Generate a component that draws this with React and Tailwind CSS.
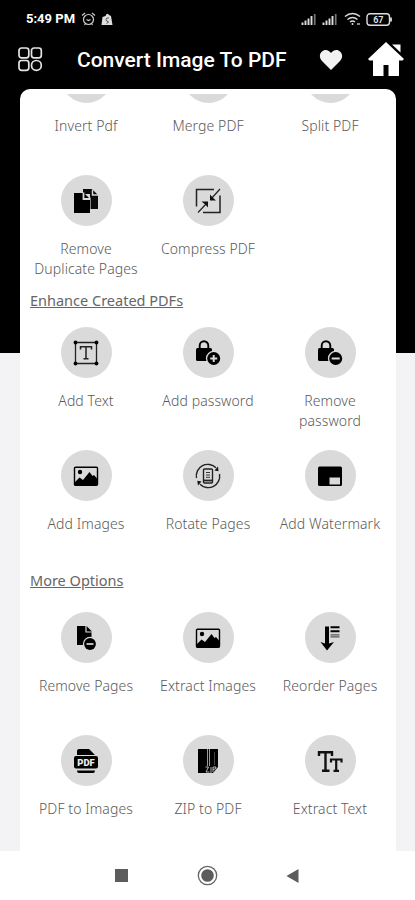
import React from "react";

const DuplicateIcon = () => (
  <svg width="26" height="26" viewBox="0 0 26 26">
    <path d="M10 1h9l6 6v14h-8V6h-7z" fill="#0a0a0a" />
    <path d="M1 5h10l6 6v14H1z" fill="#000" />
    <path d="M10.5 4.5V11H17" fill="none" stroke="#dadada" strokeWidth="1.8" />
    <path d="M19.5 1.500V7H25" fill="none" stroke="#dadada" strokeWidth="1.5" />
    <path d="M17.500 9.500V21" stroke="#dadada" strokeWidth="0.600" />
  </svg>
);

const CompressIcon = () => (
  <svg width="26" height="26" viewBox="0 0 26 26" fill="none" stroke="#222" strokeWidth="1.500">
    <path d="M1.500 18.500V1.500H19" />
    <path d="M25 7.500V24.500H8" />
    <path d="M3 24.500L12 15M25 1L16 11" strokeWidth="1.200" />
    <path d="M6.500 13.500h6.500v6l-2.200-2.500-1.800-1.600zM15 6.500v6h6l-2-1.800-2-2z" fill="#111" stroke="none" />
  </svg>
);

const TextBoxIcon = () => (
  <svg width="26" height="26" viewBox="0 0 26 26" fill="none" stroke="#222">
    <path d="M2.500 2.500h21v21h-21z" strokeWidth="1.300" />
    <path d="M7.500 9.500V6.800h11v2.700M13 6.800v12M10.500 18.800h5" strokeWidth="1.500" />
    <g fill="#000" stroke="none">
      <circle cx="2.500" cy="2.500" r="1.900" />
      <circle cx="23.500" cy="2.500" r="1.900" />
      <circle cx="2.500" cy="23.500" r="1.900" />
      <circle cx="23.500" cy="23.500" r="1.900" />
    </g>
  </svg>
);

const LockIcon = ({ plus }) => (
  <svg width="26" height="26" viewBox="0 0 26 26">
    <path d="M4.700 9V5.500a4.300 4.300 0 0 1 8.600 0V9" fill="none" stroke="#000" strokeWidth="1.900" />
    <rect x="1" y="8" width="16" height="13" rx="1.500" />
    <circle cx="18.700" cy="18.500" r="7.800" fill="#dadada" />
    <circle cx="18.700" cy="18.500" r="6.500" />
    <path d={plus ? "M15.200 18.500h7M18.700 15v7" : "M14.700 18.500h8"} stroke="#dadada" strokeWidth="2" />
  </svg>
);

const ImageIcon = () => (
  <svg width="26" height="26" viewBox="0 0 26 26">
    <rect x="1.500" y="4.200" width="23" height="18" rx="1" fill="none" stroke="#000" strokeWidth="1.400" />
    <circle cx="7" cy="9" r="2.200" />
    <path d="M2 19l4.500-4.500 3.500 2.500 6.500-8 3 4 1.500-1 3.500 4v6H2z" />
  </svg>
);

const RotateIcon = () => (
  <svg width="26" height="26" viewBox="0 0 26 26" fill="none" stroke="#222" strokeWidth="1.400">
    <path d="M1.500 15A11.500 11.500 0 0 1 21 4.800" />
    <path d="M24.500 11A11.500 11.500 0 0 1 5 21.200" />
    <path d="M19.500 7.500l4 .8L23 3.500zM6.500 18.500l-4.200-.8.700 4.800z" fill="#111" stroke="none" />
    <rect x="8.500" y="6" width="9" height="14" rx="1" />
    <path d="M8.500 17.500h9" strokeWidth="1.800" />
    <path d="M11 9.500h4M11 12h4M11 14.300h4" strokeWidth="0.900" />
  </svg>
);

const WatermarkIcon = () => (
  <svg width="26" height="26" viewBox="0 0 26 26">
    <rect x="1" y="3.500" width="24" height="19.500" rx="1.500" />
    <path d="M12.500 14.500h10.500v7h-10.500z" fill="#dadada" />
  </svg>
);

const RemovePageIcon = () => (
  <svg width="26" height="26" viewBox="0 0 26 26">
    <path d="M4 1h9.500l5 5v14H4z" />
    <path d="M13 1v6h5.500" fill="none" stroke="#dadada" strokeWidth="1.200" />
    <circle cx="17" cy="19" r="7.200" fill="#dadada" />
    <circle cx="17" cy="19" r="5.900" />
    <path d="M13.500 19h7" stroke="#dadada" strokeWidth="1.700" />
  </svg>
);

const ReorderIcon = () => (
  <svg width="26" height="26" viewBox="0 0 26 26">
    <path d="M8 1.500h4v17l5-1.500-7 8.500-6.500-8.500 4.500 1.500z" />
    <path d="M13.500 2.300h9M13.500 6.300h9" stroke="#000" strokeWidth="1.900" />
    <path d="M13.500 9.800h9M13.500 11.800h9" stroke="#555" strokeWidth="1.200" />
  </svg>
);

const PdfIcon = () => (
  <svg width="26" height="26" viewBox="0 0 26 26">
    <path d="M4 7V3q0-2 2-2h10l6 6z" />
    <rect x="1" y="8" width="24" height="12.500" rx="2" />
    <path d="M4 22.500h18q0 2.500-2 2.500H6q-2 0-2-2.500z" />
    <text
      x="13"
      y="17.600"
      textAnchor="middle"
      fill="#eee"
      fontSize="9.500"
      fontWeight="900"
      fontFamily="Roboto, sans-serif"
    >
      PDF
    </text>
  </svg>
);

const ZipIcon = () => (
  <svg width="26" height="26" viewBox="0 0 26 26">
    <path d="M3 1h20v18l-5 6H3z" />
    <path d="M12.500 1v17M14.500 1v17" stroke="#aaa" strokeWidth="0.900" />
    <path d="M19.500 4v13" stroke="#555" strokeWidth="0.800" />
    <path d="M10.500 19h3l-2.500 5h3.500M16 25v-6M18 24v-5h3q.5 2.500-3 2.500" stroke="#ccc" strokeWidth="0.900" fill="none" />
  </svg>
);

const FontSizeIcon = () => (
  <svg width="26" height="26" viewBox="0 0 26 26" fill="none" stroke="#111">
    <path d="M2 8V4.300h13V8M8.500 4v19M5 22.800h7.500" strokeWidth="2.400" />
    <path d="M14 14.500v-3h10.500v3M19.200 11.500V23M16.500 22.800h5.500" strokeWidth="2.200" />
  </svg>
);

const topTools = [
  { label: "Invert Pdf" },
  { label: "Merge PDF" },
  { label: "Split PDF" },
  { label: "Remove Duplicate Pages", icon: <DuplicateIcon /> },
  { label: "Compress PDF", icon: <CompressIcon /> },
];

const enhanceTools = [
  { label: "Add Text", icon: <TextBoxIcon /> },
  { label: "Add password", icon: <LockIcon plus /> },
  { label: "Remove password", icon: <LockIcon /> },
  { label: "Add Images", icon: <ImageIcon /> },
  { label: "Rotate Pages", icon: <RotateIcon /> },
  { label: "Add Watermark", icon: <WatermarkIcon /> },
];

const moreTools = [
  { label: "Remove Pages", icon: <RemovePageIcon /> },
  { label: "Extract Images", icon: <ImageIcon /> },
  { label: "Reorder Pages", icon: <ReorderIcon /> },
  { label: "PDF to Images", icon: <PdfIcon /> },
  { label: "ZIP to PDF", icon: <ZipIcon /> },
  { label: "Extract Text", icon: <FontSizeIcon /> },
];

const ToolGrid = ({ tools }) => (
  <div className="grid grid-cols-3 gap-y-5">
    {tools.map((tool) => (
      <div key={tool.label} className="flex h-[103px] flex-col items-center gap-[13px]">
        <div className="flex h-[51px] w-[51px] shrink-0 items-center justify-center rounded-full bg-[#dadada]">
          {tool.icon}
        </div>
        <div className="px-1 text-center text-sm leading-5 font-light tracking-[0.1px] text-[#5a5a5a]">
          {tool.label}
        </div>
      </div>
    ))}
  </div>
);

const SectionTitle = ({ children }) => (
  <h2 className="pl-[5px] text-[14.500px] leading-5 text-[#666] underline underline-offset-1">{children}</h2>
);

const Signal = () => (
  <svg width="16" height="12" viewBox="0 0 16 12">
    <path d="M1.500 12V9.500M4.500 12V7.500M7.500 12V5.500M10.500 12V3" stroke="#ddd" strokeWidth="1.900" />
    <path d="M13.700 12V1" stroke="#777" strokeWidth="1.700" />
  </svg>
);

const StatusBar = () => (
  <div className="flex h-[38px] items-center pr-[22px] pl-[26px] font-[Roboto,sans-serif] text-white">
    <span className="w-[50px] text-[13px] font-bold whitespace-nowrap">5:49 PM</span>
    <svg className="ml-[5px]" width="15" height="14" viewBox="0 0 15 14" fill="none" stroke="#ccc" strokeWidth="1.200">
      <circle cx="7.500" cy="7.500" r="5" />
      <path d="M1 3.500L4 1M14 3.500L11 1M3.500 13l1-1.500M11.500 13l-1-1.500M5.500 7.500l2 1 2-1" />
    </svg>
    <svg className="ml-[5px]" width="12" height="14" viewBox="0 0 12 14">
      <path d="M1.500 5l3-1Q6 0 8 3l2 1 1.500 9h-11z" fill="#ddd" />
      <path d="M8 6q-3-.5-3 1.500t2 2-1.500 2" stroke="#555" strokeWidth="1" fill="none" />
    </svg>
    <div className="ml-auto flex items-center">
      <Signal />
      <span className="w-[5px]" />
      <Signal />
      <svg className="ml-[6px]" width="18" height="14" viewBox="0 0 18 14" fill="none" stroke="#ddd" strokeWidth="1.500">
        <path d="M1 4.500q7.500-6 15 0M3.500 7.500q5-4 10 0M6 10q2.500-2 5 0" />
        <circle cx="8.500" cy="12" r="1" fill="#ddd" stroke="none" />
        <path d="M13 12h3" strokeWidth="1.800" stroke="#999" />
      </svg>
      <svg className="ml-[4px]" width="27" height="13" viewBox="0 0 27 13">
        <rect x="1" y="0.800" width="22.500" height="11.400" rx="3" fill="none" stroke="#ddd" strokeWidth="1.400" />
        <path d="M25 4.500v4" stroke="#ddd" strokeWidth="1.800" />
        <text x="12.300" y="9.700" textAnchor="middle" fill="#ddd" fontSize="9" fontWeight="700">
          67
        </text>
      </svg>
    </div>
  </div>
);

const Header = () => (
  <div className="flex h-[51px] items-center pt-[1px] pr-[11px] pb-[9px] pl-[18px]">
    <svg width="25" height="25" viewBox="0 0 25 25" fill="none" stroke="#e4e4e4" strokeWidth="1.700">
      <rect x="1" y="1" width="9.800" height="9.800" rx="2.500" />
      <rect x="13.500" y="1" width="9.800" height="9.800" rx="2.500" />
      <rect x="1" y="13.500" width="9.800" height="9.800" rx="2.500" />
      <circle cx="18.400" cy="18.400" r="4.900" />
    </svg>
    <h1 className="ml-[34px] w-[212px] pt-[3px] font-[Roboto,sans-serif] text-[21px] font-medium whitespace-nowrap text-white">
      Convert Image To PDF
    </h1>
    <svg className="ml-[30px]" width="24" height="22" viewBox="0 0 24 22">
      <path d="M12 21L3 12C-2 6 3 1 6.500 1 9 1 11 2.500 12 4c1-1.500 3-3 5.500-3C21 1 26 6 21 12z" fill="#f2f2f2" />
    </svg>
    <svg className="ml-auto" width="36" height="36" viewBox="0 0 36 36" fill="#fff">
      <path d="M18 0L0 17l1.500 1.500H5V34h10.500V23h5v11H31V18.500h3.500L36 17z" />
      <path d="M24 2.500h8.500v8z" />
    </svg>
  </div>
);

const NavBar = () => (
  <div className="flex h-[49px] items-center bg-white pl-[115px]">
    <div className="h-[13px] w-[13px] bg-[#5c5c5c]" />
    <svg className="ml-[69px]" width="21" height="21" viewBox="0 0 21 21">
      <circle cx="10.500" cy="10.500" r="9.200" fill="none" stroke="#666" strokeWidth="1.300" />
      <circle cx="10.500" cy="10.500" r="6.300" fill="#5c5c5c" />
    </svg>
    <svg className="ml-[68px]" width="13" height="14" viewBox="0 0 13 14">
      <path d="M0.500 7L12.500 0v14z" fill="#5c5c5c" />
    </svg>
  </div>
);

const App = () => {
  return (
    <div className="flex h-[900px] w-[415px] flex-col overflow-hidden bg-[linear-gradient(#000_353px,#f3f3f6_353px)] font-['Noto_Sans',sans-serif]">
      <StatusBar />
      <Header />

      <div className="mr-[19px] ml-5 h-[762px] rounded-t-[10px] bg-white px-[5px] pt-[5px]">
        {/* Scrolled list */}
        <div className="flex h-[757px] flex-col justify-end overflow-hidden pb-[13px]">
          <ToolGrid tools={topTools} />
          <div className="mt-3 mb-[17px]">
            <SectionTitle>Enhance Created PDFs</SectionTitle>
          </div>
          <ToolGrid tools={enhanceTools} />
          <div className="mt-[17px] mb-[22px]">
            <SectionTitle>More Options</SectionTitle>
          </div>
          <ToolGrid tools={moreTools} />
        </div>
      </div>

      <NavBar />
    </div>
  );
};

export default App;
